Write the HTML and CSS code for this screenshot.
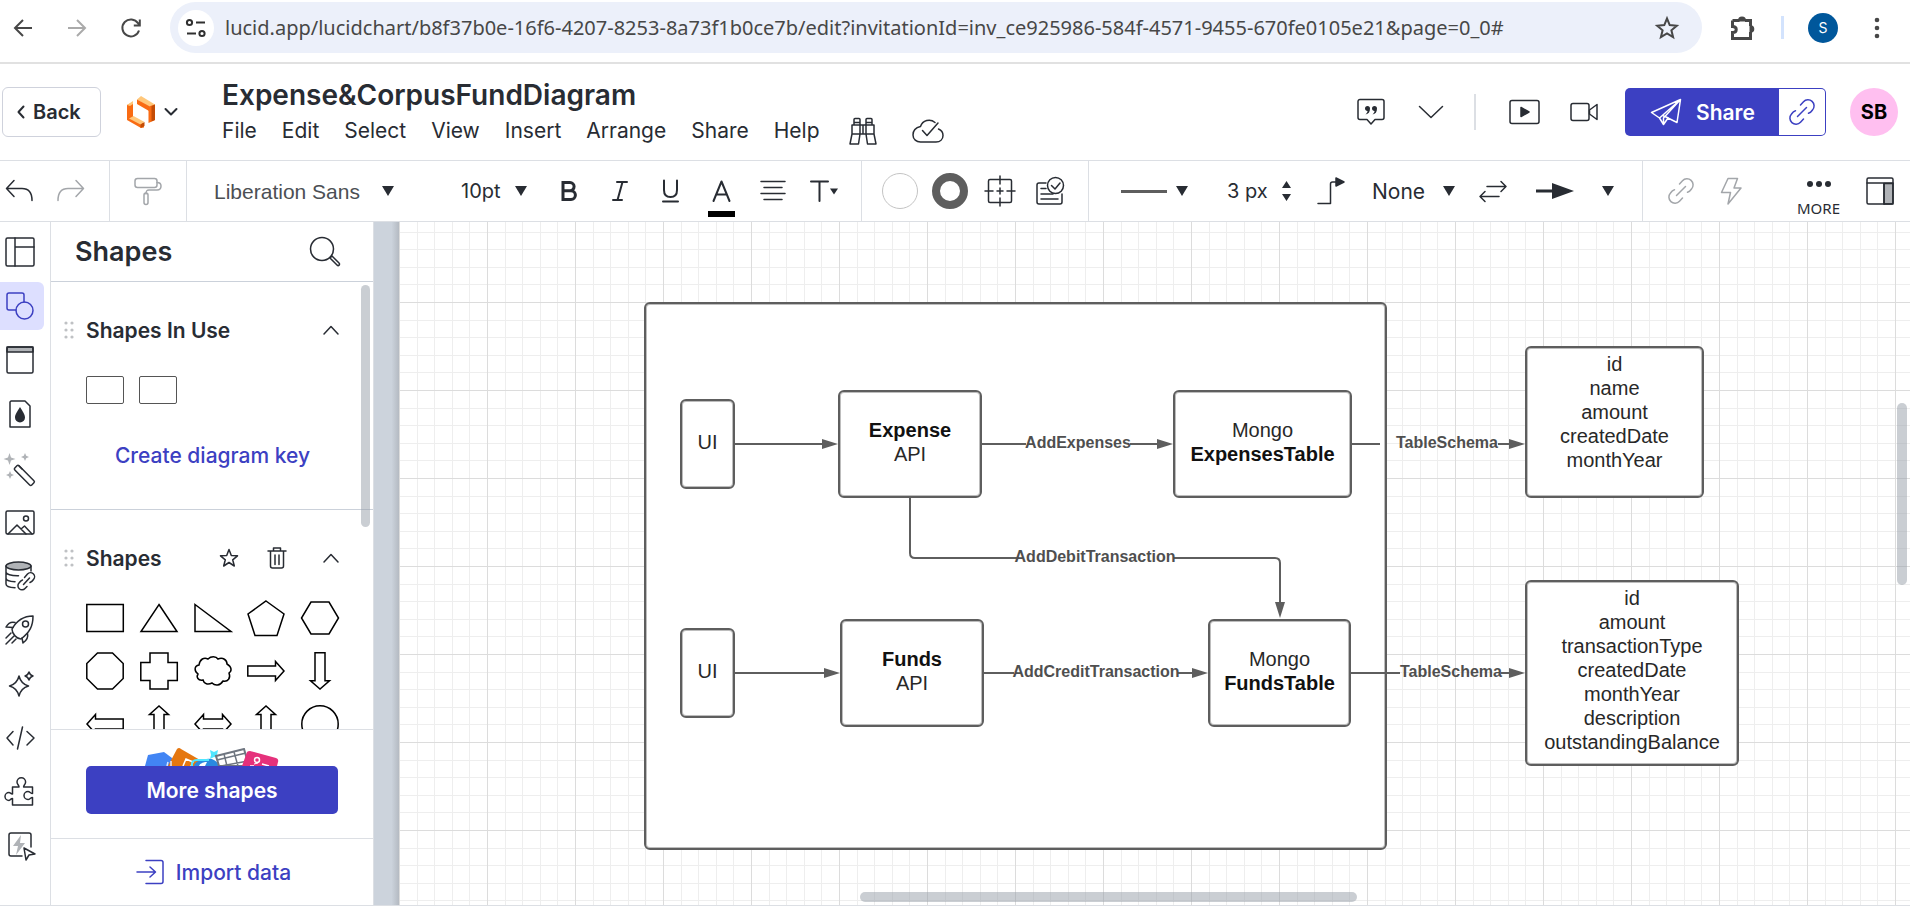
FILE: index.html
```html
<!DOCTYPE html>
<html lang="en">
<head>
<meta charset="utf-8">
<title>Expense&amp;CorpusFundDiagram: Lucidchart</title>
<link rel="stylesheet" href="styles.css">
</head>
<body>
<header class="browser">
  <nav class="browser-nav" aria-label="Browser">
    <button class="plain" aria-label="Go back"><svg width="24" height="24" viewBox="0 0 24 24" class="chrome-ink"><path d="M21 12H4M12 4l-8 8 8 8"/></svg></button>
    <button class="plain" aria-label="Go forward" disabled><svg width="24" height="24" viewBox="0 0 24 24" class="chrome-ink faded"><path d="M3 12h17M12 4l8 8-8 8"/></svg></button>
    <button class="plain" aria-label="Reload"><svg width="24" height="24" viewBox="0 0 24 24" class="chrome-ink"><path d="M20 14.500A8.500 8.500 0 1 1 19 7.200L20.500 9M20.800 3.500V9.500H14.800"/></svg></button>
  </nav>
  <div class="address">
    <button class="site-info plain" aria-label="Site information"><svg width="22" height="20" viewBox="0 0 22 20" class="chrome-ink thick"><circle cx="4.500" cy="4.500" r="2.600"/><path d="M11 4.500h9M2 15.500h9"/><circle cx="17" cy="15.500" r="2.600"/></svg></button>
    <input class="url" type="text" aria-label="Address" value="lucid.app/lucidchart/b8f37b0e-16f6-4207-8253-8a73f1b0ce7b/edit?invitationId=inv_ce925986-584f-4571-9455-670fe0105e21&amp;page=0_0#">
    <button class="plain" aria-label="Bookmark"><svg width="24" height="24" viewBox="0 0 24 24" class="chrome-ink"><path d="M12 2.500l2.700 6.600 7.100.6-5.400 4.600 1.700 6.900L12 17.500l-6.100 3.700 1.700-6.900L2.200 9.700l7.100-.6z"/></svg></button>
  </div>
  <div class="browser-tools">
    <button class="plain" aria-label="Extensions"><svg width="26" height="26" viewBox="0 0 26 26" class="chrome-ink"><path d="M2.500 5.500H9.500M15 5.500H20.500V11M20.500 17V23.500H2.500V17.500C7.500 17.500 7.500 11.500 2.500 11.500V5.500" stroke-width="3"/><path d="M9 5.500a3 3 0 0 1 6 0zM20.500 11.200a2.700 2.700 0 0 1 0 5.600z" class="solid"/></svg></button>
    <span class="browser-rule"></span>
    <button class="profile" aria-label="Profile">S</button>
    <button class="plain" aria-label="Browser menu"><svg width="6" height="22" viewBox="0 0 6 22" fill="#474747"><circle cx="3" cy="3" r="2.300"/><circle cx="3" cy="11" r="2.300"/><circle cx="3" cy="19" r="2.300"/></svg></button>
  </div>
</header>

<header class="app-header">
  <button class="back"><svg width="8" height="14" viewBox="0 0 8 14" class="ink bold"><path d="M6.500 1.500L1.500 7l5 5.500"/></svg>Back</button>
  <button class="plain brand" aria-label="Lucidchart menu">
    <svg width="28" height="32" viewBox="0 0 28 32"><path d="M0 9l6-3v16l-6 0z" fill="#f96b13"/><path d="M0 9l6-4v3l-3 2z" fill="#ffc77a"/><path d="M0 22l6-1 11 6.500V31.500L14 32 0 24z" fill="#f96b13"/><path d="M2 22.500l4.500-2.500 11 6-4 2.500z" fill="#ffc77a"/><path d="M13.500 28.500l4-2.500v4l-4 2z" fill="#c44c05"/><path d="M10 3.500L14 0 28 8.500 22 11z" fill="#ffc77a"/><path d="M10 3.500L22 10v5L10 8z" fill="#f96b13"/><path d="M21.500 10.500L28 8.500V24l-6.500 3z" fill="#f96b13"/><path d="M24.500 10L28 8.500V24l-3.500 1.500z" fill="#c44c05"/></svg>
    <svg width="14" height="10" viewBox="0 0 14 10" class="ink bold"><path d="M1.500 2L7 7.500 12.500 2"/></svg>
  </button>
  <div class="doc">
    <h1 class="doc-title">Expense&amp;CorpusFundDiagram</h1>
    <nav class="menu" aria-label="Document">
      <button class="plain">File</button><button class="plain">Edit</button><button class="plain">Select</button><button class="plain">View</button><button class="plain">Insert</button><button class="plain">Arrange</button><button class="plain">Share</button><button class="plain">Help</button>
      <button class="plain find" aria-label="Find"><svg width="28" height="28" viewBox="0 0 28 28" class="ink"><path d="M3 8h22v9H3zM5 8V2.500q0-1 1-1h4q1 0 1 1V8M17 8V2.500q0-1 1-1h4q1 0 1 1V8M11 8v9M17 8v9M3 17L1 27h8.500l1.500-10M25 17l2 10h-8.500L17 17M5 5.500h6M17 5.500h6M14 8v9"/></svg></button>
      <button class="plain saved" aria-label="Saved"><svg width="32" height="26" viewBox="0 0 32 26" class="ink"><path d="M23 4.500A9 9 0 0 0 8.500 8.500C4 9.500 1 12.500 1 17c0 4.500 3.500 7 7.500 7H24c4 0 7-2.500 7-6.500 0-3-2-5.500-4.500-6.500"/><path d="M10.500 12.500l4.500 5L26 5"/></svg></button>
    </nav>
  </div>
  <div class="header-tools">
    <button class="plain" aria-label="Comments"><svg width="28" height="28" viewBox="0 0 28 28" class="ink"><path d="M3 1.500h22a2 2 0 0 1 2 2v16a2 2 0 0 1-2 2h-7L14 26l-4-4.500H3a2 2 0 0 1-2-2v-16a2 2 0 0 1 2-2z"/><path d="M8 10.500a2.500 2.500 0 1 1 5 0c0 3.500-1.500 5.500-4.500 6 1.500-1.500 2-2.500 2-3.500-1.500 0-2.500-1-2.500-2.500zM15 10.500a2.500 2.500 0 1 1 5 0c0 3.500-1.500 5.500-4.500 6 1.500-1.500 2-2.500 2-3.500-1.500 0-2.500-1-2.500-2.500z" fill="#282c33" stroke="none"/></svg></button>
    <button class="plain more-caret" aria-label="More"><svg width="26" height="14" viewBox="0 0 26 14" class="ink"><path d="M1.500 1.500L13 12.500 24.500 1.500"/></svg></button>
    <span class="header-rule"></span>
    <button class="plain" aria-label="Present"><svg width="32" height="26" viewBox="0 0 32 26" class="ink"><rect x="1" y="1.500" width="29" height="23" rx="2"/><path d="M12 8.500l8 4.500-8 4.500z" fill="#282c33"/></svg></button>
    <button class="plain video" aria-label="Video call"><svg width="28" height="20" viewBox="0 0 28 20" class="ink"><rect x="1" y="1.500" width="18" height="17" rx="2"/><path d="M19.500 8L27 2.500v15L19.500 12z"/></svg></button>
    <div class="share">
      <button class="share-main"><svg width="32" height="28" viewBox="0 0 32 28" class="on-dark"><path d="M30.500 1.500L1.500 14.500l8 5.500L30.500 1.500l-3.500 23-9-4.500-4.500 6.500-4-6.500M30.500 1.500L13.500 20v6M13.500 18l5 2"/></svg>Share</button>
      <button class="share-link" aria-label="Copy link"><svg width="26" height="26" viewBox="0 0 26 26" class="indigo"><path d="M11.500 6l3-3.200a6 6 0 0 1 9 8.200c-1 1.500-2 2.700-4 3.200M14.500 20l-3 3.200a6 6 0 0 1-9-8.200c1-1.500 2-2.700 4-3.200M8.500 17.500l9-9"/></svg></button>
    </div>
    <button class="avatar" aria-label="Account">SB</button>
  </div>
</header>

<div class="toolbar" role="toolbar" aria-label="Formatting">
  <div class="group g-history">
    <button class="plain" aria-label="Undo"><svg width="28" height="24" viewBox="0 0 28 24" class="ink"><path d="M9 1.500L1.500 9.500 9 17.500M1.500 9.500H17c6.500 0 10 4 10 12"/></svg></button>
    <button class="plain" aria-label="Redo" disabled><svg width="28" height="24" viewBox="0 0 28 24" class="ink grey"><path d="M19 1.500l7.500 8-7.500 8M26.500 9.500H11c-6.500 0-10 4-10 12"/></svg></button>
  </div>
  <div class="group g-paint">
    <button class="plain" aria-label="Format painter" disabled><svg width="28" height="28" viewBox="0 0 28 28" class="ink grey"><rect x="1" y="1.500" width="22" height="9" rx="2.500"/><path d="M23 5.500c3 0 4 1 4 3.500s-1.500 4-4 4H15c-2.500 0-3 1-3 4"/><rect x="10" y="16" width="4" height="11.500" rx="2"/></svg></button>
  </div>
  <div class="group g-text">
    <select class="pick font-pick" aria-label="Font"><option>Liberation Sans</option></select><svg class="caret" width="12" height="10" viewBox="0 0 12 10"><path d="M0 0h12L6 10z"/></svg>
    <select class="pick size-pick" aria-label="Font size"><option>10pt</option></select><svg class="caret" width="12" height="10" viewBox="0 0 12 10"><path d="M0 0h12L6 10z"/></svg>
    <div class="style-buttons">
      <button class="plain" aria-label="Bold"><svg width="20" height="24" viewBox="0 0 20 24" class="ink heavy"><path d="M4 3.500h7a4 4 0 0 1 0 8.200H4zM4 11.700h8a4.400 4.400 0 0 1 0 8.800H4z"/></svg></button>
      <button class="plain" aria-label="Italic"><svg width="20" height="24" viewBox="0 0 20 24" class="ink bold"><path d="M7 3h10M3 21h9M12.500 3L7.500 21"/></svg></button>
      <button class="plain" aria-label="Underline"><svg width="20" height="24" viewBox="0 0 20 24" class="ink bold"><path d="M3 1.500V11c0 4.500 2.500 7 6.500 7s6.500-2.500 6.500-7V1.500M2 22.500h15"/></svg></button>
      <button class="plain font-color" aria-label="Text colour"><svg width="20" height="24" viewBox="0 0 20 24" class="ink bold"><path d="M1.500 22L9.500 2.500 17.500 22M4.500 15.500h10"/></svg></button>
      <button class="plain" aria-label="Align"><svg width="26" height="24" viewBox="0 0 26 24" class="ink"><path d="M1 2.500h24M4 8.500h18M1 14.500h24M4 20.500h18"/></svg></button>
      <button class="plain" aria-label="Text options"><svg width="28" height="24" viewBox="0 0 28 24" class="ink bold"><path d="M1 2.500h17M9.500 2.500V22"/><path d="M20 9.500h8l-4 6z" fill="#282c33" stroke="none"/></svg></button>
    </div>
  </div>
  <div class="group g-shape">
    <button class="plain" aria-label="Fill"><span class="fill-dot"></span></button>
    <button class="plain" aria-label="Line colour"><span class="line-dot"></span></button>
    <button class="plain" aria-label="Frame"><svg width="30" height="30" viewBox="0 0 30 30" class="ink"><rect x="3.500" y="3.500" width="23" height="23" rx="1.500"/><path d="M15 0v8M15 22v8M0 15h8M22 15h8M15 12v6M12 15h6"/></svg></button>
    <button class="plain" aria-label="Tasks"><svg width="30" height="30" viewBox="0 0 30 30" class="ink"><path d="M11 7H4a2 2 0 0 0-2 2v17a2 2 0 0 0 2 2h21a2 2 0 0 0 2-2v-8M6 12.500h5M6 18h9M6 23h17M16 18h2"/><circle cx="20.500" cy="9.500" r="8"/><path d="M16.500 9.500l3.500 3.500 5-6"/></svg></button>
  </div>
  <div class="group g-line">
    <button class="plain line-pick" aria-label="Line style"><span class="line-sample"></span><svg class="caret" width="12" height="10" viewBox="0 0 12 10"><path d="M0 0h12L6 10z"/></svg></button>
    <input class="width-input" type="text" aria-label="Line width" value="3 px">
    <button class="plain stepper" aria-label="Change line width"><svg width="9" height="20" viewBox="0 0 9 20" class="caret"><path d="M0 7h9L4.500 0zM0 13h9L4.500 20z"/></svg></button>
    <button class="plain elbow" aria-label="Connector shape"><svg width="28" height="28" viewBox="0 0 28 28" class="ink"><path d="M1 26.500h12.500V7a2 2 0 0 1 2-2H20"/><path d="M19 1l8 4-8 4z" fill="#282c33"/></svg></button>
    <select class="pick end-pick" aria-label="Line start"><option>None</option></select><svg class="caret" width="12" height="10" viewBox="0 0 12 10"><path d="M0 0h12L6 10z"/></svg>
    <button class="plain swap" aria-label="Swap ends"><svg width="28" height="22" viewBox="0 0 28 22" class="ink"><path d="M8 6.500h19M22 1.500l5 5-5 5M20 16.500H1M6 11.500l-5 5 5 5"/></svg></button>
    <button class="plain end-arrow" aria-label="Line end"><svg width="38" height="16" viewBox="0 0 38 16"><path d="M0 6.500h16V0l22 8-22 8V9.500H0z" fill="#282c33"/></svg><svg class="caret" width="12" height="10" viewBox="0 0 12 10"><path d="M0 0h12L6 10z"/></svg></button>
  </div>
  <div class="group g-extra">
    <button class="plain" aria-label="Link" disabled><svg width="26" height="26" viewBox="0 0 26 26" class="ink grey"><path d="M11.500 6l3-3.200a6 6 0 0 1 9 8.200c-1 1.500-2 2.700-4 3.200M14.500 20l-3 3.200a6 6 0 0 1-9-8.200c1-1.500 2-2.700 4-3.200M8.500 17.500l9-9"/></svg></button>
    <button class="plain" aria-label="Actions" disabled><svg width="22" height="28" viewBox="0 0 22 28" class="ink grey"><path d="M8 1.500h9.500L14 11h7L8 27l2.500-11.500H1.500z"/></svg></button>
    <button class="plain more"><svg width="26" height="8" viewBox="0 0 26 8" fill="#282c33"><circle cx="4" cy="4" r="3"/><circle cx="13" cy="4" r="3"/><circle cx="22" cy="4" r="3"/></svg>MORE</button>
    <button class="plain" aria-label="Toggle side panel"><svg width="28" height="28" viewBox="0 0 28 28" class="ink"><path d="M18 6.500h9v20.500h-9z" fill="#b0b3b7"/><rect x="1" y="1" width="26" height="26" rx="1.500"/><path d="M1 6h26M18 6v21"/></svg></button>
  </div>
</div>

<main class="workspace">
  <nav class="rail" aria-label="Tools">
    <button class="plain" aria-label="Templates"><svg width="32" height="32" viewBox="0 0 32 32" class="ink"><rect x="2" y="2" width="28" height="28" rx="1.500"/><path d="M11 2v28M11 11h19"/></svg></button>
    <button class="plain active" aria-label="Shapes"><svg width="32" height="32" viewBox="0 0 32 32" class="indigo"><path d="M12 20H5a2 2 0 0 1-2-2V5a2 2 0 0 1 2-2h13a2 2 0 0 1 2 2v7"/><circle cx="20.500" cy="20.500" r="8.500"/></svg></button>
    <button class="plain" aria-label="Containers"><svg width="32" height="32" viewBox="0 0 32 32" class="ink"><path d="M3 3h26v5H3z" fill="#b0b3b7"/><rect x="3" y="3" width="26" height="26" rx="1.500"/></svg></button>
    <button class="plain" aria-label="Themes"><svg width="32" height="32" viewBox="0 0 32 32" class="ink"><path d="M7 3h14l5 5v21H6V4z"/><path d="M16 9c3 5 5 7.500 5 10.500a5 5 0 0 1-10 0C11 16.500 13 14 16 9z" fill="#282c33" stroke="none"/></svg></button>
    <button class="plain" aria-label="Magic"><svg width="32" height="32" viewBox="0 0 32 32" class="ink"><rect x="11" y="14" width="24" height="6" rx="1.500" transform="rotate(45 14 17)"/><path d="M15 14l3 3"/><path d="M5.500 1l1.500 4.500L11.500 7 7 8.500 5.500 13 4 8.500-.5 7 4 5.500zM21 1l1.200 2.800L25 5l-2.800 1.200L21 9l-1.200-2.800L17 5l2.800-1.200zM6 19l1.200 2.800L10 23l-2.800 1.200L6 27l-1.200-2.800L2 23l2.800-1.200z" fill="#b0b3b7" stroke="none"/></svg></button>
    <button class="plain" aria-label="Images"><svg width="32" height="32" viewBox="0 0 32 32" class="ink"><rect x="2" y="5" width="28" height="23" rx="1.500"/><circle cx="22" cy="12.500" r="2.500"/><path d="M4 28l9-9 9 9M17 23l3.500-3 7.500 8"/></svg></button>
    <button class="plain" aria-label="Data linking"><svg width="32" height="32" viewBox="0 0 32 32" class="ink"><ellipse cx="14.500" cy="6" rx="12.500" ry="4" fill="#b0b3b7"/><path d="M2 6v18c0 2 4 3.500 9 3.700M27 6v5M2 12c0 2 5 4 12.500 3.800M2 18c0 2 4 3.500 9 3.700"/><path d="M20.500 17.500l3-3.500a4 4 0 0 1 6 5.500c-1 1.500-2 2.500-3.500 3M23 26.500l-2 2a4 4 0 0 1-6-5.500c1-1.500 2-2.500 3.500-3M19.500 24.500l6-6.500"/></svg></button>
    <button class="plain" aria-label="Quick start"><svg width="32" height="32" viewBox="0 0 32 32" class="ink"><path d="M8 15C13 6 19 2 29 2c0 10-3 16-12 23-4 0-9-5-9-10z"/><circle cx="21.500" cy="10" r="3"/><path d="M11 8.500c-4-1-7 1-9 4.500l7 .5M23.500 19.500c1 4-1 7-4.500 9.500l-1-5M7 19l-5 5M10 22l-8 8M12 25l-4 4"/></svg></button>
    <button class="plain" aria-label="AI"><svg width="32" height="32" viewBox="0 0 32 32" class="ink"><path d="M15 8c1.500 6 4 8.500 9.500 10C19 19.500 16.500 22 15 28c-1.500-6-4-8.500-9.500-10C11 16.500 13.500 14 15 8zM25 4c1 3 2 3.500 4 4-2 .5-3 1-4 4-1-3-2-3.500-4-4 2-.5 3-1 4-4z"/></svg></button>
    <button class="plain" aria-label="Code"><svg width="32" height="32" viewBox="0 0 32 32" class="ink"><path d="M9 9.500L3 16l6 7M23 9.500l7 6.500-7 7M18.500 5l-5 22"/></svg></button>
    <button class="plain" aria-label="Add-ons"><svg width="32" height="32" viewBox="0 0 32 32" class="ink"><path d="M8.500 11H15c0-2-2-2.500-2-5a4.300 4.300 0 0 1 8.600 0c0 2.500-2 3-2 5h8.900v6.500c-2 0-2.500-2-4.500-2a4 4 0 0 0 0 8c2 0 2.500-2 4.500-2V29h-20v-6.500c-2 0-2 2-3.500 2a4 4 0 0 1 0-8c1.500 0 1.500 1.500 3.500 1.500z"/></svg></button>
    <button class="plain" aria-label="Automation"><svg width="32" height="32" viewBox="0 0 32 32" class="ink"><path d="M17 5l-8 11h5l-2 9 9-12h-5z" fill="#b0b3b7" stroke="none"/><path d="M18 26H7a2 2 0 0 1-2-2V5a2 2 0 0 1 2-2h18a2 2 0 0 1 2 2v12"/><path d="M20 18l11 6-6 1-3 5z"/></svg></button>
  </nav>

  <aside class="panel">
    <div class="panel-head">
      <h2>Shapes</h2>
      <button class="plain" aria-label="Search shapes"><svg width="32" height="32" viewBox="0 0 32 32" class="ink"><circle cx="13" cy="13" r="11.500"/><path d="M21 22l2-2 7 7c1.500 1.500-.5 3.500-2 2z"/></svg></button>
    </div>
    <div class="panel-scroll">
      <section class="library in-use">
        <div class="library-head">
          <svg class="grip" width="10" height="18" viewBox="0 0 10 18"><circle cx="2" cy="2" r="1.600"/><circle cx="8" cy="2" r="1.600"/><circle cx="2" cy="9" r="1.600"/><circle cx="8" cy="9" r="1.600"/><circle cx="2" cy="16" r="1.600"/><circle cx="8" cy="16" r="1.600"/></svg>
          <h3>Shapes In Use</h3>
          <button class="plain" aria-label="Collapse Shapes In Use"><svg width="16" height="10" viewBox="0 0 16 10" class="ink"><path d="M1 9l7-7.500L15 9"/></svg></button>
        </div>
        <div class="used"><span class="used-shape"></span><span class="used-shape"></span></div>
        <a class="key-link" href="#key">Create diagram key</a>
      </section>
      <section class="library">
        <div class="library-head">
          <svg class="grip" width="10" height="18" viewBox="0 0 10 18"><circle cx="2" cy="2" r="1.600"/><circle cx="8" cy="2" r="1.600"/><circle cx="2" cy="9" r="1.600"/><circle cx="8" cy="9" r="1.600"/><circle cx="2" cy="16" r="1.600"/><circle cx="8" cy="16" r="1.600"/></svg>
          <h3>Shapes</h3>
          <button class="plain" aria-label="Favourite"><svg width="18" height="20" viewBox="0 0 18 20" class="ink"><path d="M9 1.500l2.300 6 6.200.3-4.800 4 1.600 6.200L9 14.500 3.700 18l1.600-6.200-4.800-4 6.200-.3z"/></svg></button>
          <button class="plain trash" aria-label="Delete"><svg width="18" height="22" viewBox="0 0 18 22" class="ink"><path d="M0 4h18M5.500 4V1h7v3M2.500 4v15a2 2 0 0 0 2 2h9a2 2 0 0 0 2-2V4M7 8v9.500M11 8v9.500"/></svg></button>
          <button class="plain fold" aria-label="Collapse Shapes"><svg width="16" height="10" viewBox="0 0 16 10" class="ink"><path d="M1 9l7-7.500L15 9"/></svg></button>
        </div>
        <div class="palette">
          <svg viewBox="0 0 38 38"><path d="M.8 5.500h36.500v27H.8z"/></svg>
          <svg viewBox="0 0 38 38"><path d="M19 5.500l18 27H1z"/></svg>
          <svg viewBox="0 0 38 38"><path d="M1 5.500l36 27H1z"/></svg>
          <svg viewBox="0 0 38 38"><path d="M19 2l18 13-7 21.500H8L1 15z"/></svg>
          <svg viewBox="0 0 38 38"><path d="M10 3h18l9.500 16L28 35H10L.5 19z"/></svg>
          <svg viewBox="0 0 38 38"><path d="M11.500 1h15l10.700 10.500v15L26.500 37h-15L.8 26.500v-15z"/></svg>
          <svg viewBox="0 0 38 38"><path d="M10 1h18v9.500h9.300v18H28V37H10v-8.500H.8v-18H10z"/></svg>
          <svg viewBox="0 0 38 38"><path d="M5 13c1-6 5-8 9-6 3-3 8-3 10 0 5-2 9 1 9 5 5 3 5 7 2 9 2 5-1 9-6 8-3 5-8 5-11 2-4 2-8 1-9-3-5 1-7-3-5-6-4-3-4-8 1-9z"/></svg>
          <svg viewBox="0 0 38 38"><path d="M.8 14h27.700v-4.500L37 19l-8.500 9.500V24H.8z"/></svg>
          <svg viewBox="0 0 38 38"><path d="M14 .8v28H9.500L19 37l9.500-8.200H24V.8z"/></svg>
          <svg viewBox="0 0 38 38"><path d="M37.200 14H9.500V9.500L1 19l8.500 9.500V24h27.700z"/></svg>
          <svg viewBox="0 0 38 38"><path d="M14 37.200V9.500H9.500L19 1l9.500 8.500H24v27.700z"/></svg>
          <svg viewBox="0 0 38 38"><path d="M1 19l8.500-9.500V14h19V9.500L37 19l-8.500 9.500V24h-19v4.500z"/></svg>
          <svg viewBox="0 0 38 38"><path d="M14 37.200V9.500H9.500L19 1l9.500 8.500H24v27.700z"/></svg>
          <svg viewBox="0 0 38 38"><circle cx="19" cy="19" r="18.200"/></svg>
        </div>
      </section>
      <span class="thumb thumb-panel"></span>
    </div>
    <div class="panel-more">
      <svg class="teaser" width="136" height="18" viewBox="0 0 136 18"><path d="M1 18L4 7 20 4l8 6 2 8z" fill="#4285f4"/><path d="M24 18L33 1q2-2 4 0L56 12v6z" fill="#e57710"/><path d="M39 18l3-7 7 3-2 4" fill="none" stroke="#fff" stroke-width="1.500"/><path d="M50 18c1-4 5-6 9-6 8-3 14 0 16 6z" fill="#2a8ae0"/><path d="M55 18c1-3 5-4 8-4l-2 4z" fill="#fff"/><path d="M48 18v-3q1-3 5-3h12" fill="none" stroke="#50e6ff" stroke-width="2"/><path d="M66 2l4 2 4-2-1 5 2 3-5-1-4 2 1-4z" fill="#50e6ff"/><path d="M75 18l-3-10 28-7 5 17z" fill="#fff" stroke="#6f7680" stroke-width="2"/><path d="M73 12l29-7M80 6l3 12M90 4l4 14M77 18l27-5" fill="none" stroke="#6f7680" stroke-width="1.500"/><path d="M98 18l5-14q1-1 3-1l26 7q3 1 2 4l-1 4z" fill="#e5317b"/><path d="M106 18h4m8-2l7 2" stroke="#fff" stroke-width="1.500"/><circle cx="113" cy="12" r="2.500" fill="none" stroke="#fff" stroke-width="1.500"/><path d="M110 16l4-1" stroke="#fff"/><path d="M23 18l1-4m3 4v-5" stroke="#dbe8ff" stroke-width="1.500"/></svg>
      <button class="more-shapes">More shapes</button>
    </div>
    <button class="import plain"><svg width="28" height="26" viewBox="0 0 28 26" class="indigo"><path d="M9 1.500h15a2 2 0 0 1 2 2v19a2 2 0 0 1-2 2H9M0 13h18M13 8l5.500 5-5.500 5"/></svg>Import data</button>
  </aside>

  <div class="gutter"></div>

  <div class="canvas">
    <div class="grid-sheet"></div>
    <div class="node boundary"></div>
    <svg class="wires" width="1511" height="683" viewBox="0 0 1511 683">
      <g fill="none" stroke="#5e5e5e" stroke-width="2">
        <path d="M336 222h90M583 222h44M731 222h28M953 222h28M1099 222h12"/>
        <path d="M511 276v55q0 5 5 5h102M774 336h102q5 0 5 5v39"/>
        <path d="M336 451h92M585 451h30M779 451h15M952 451h49M1102 451h10"/>
      </g>
      <g fill="#5e5e5e">
        <path d="M423 217l16 5-16 5zM758 217l16 5-16 5zM1110 217l16 5-16 5z"/>
        <path d="M876 380h10l-5 16zM425 446l16 5-16 5zM793 446l16 5-16 5zM1110 446l16 5-16 5z"/>
      </g>
    </svg>
    <div class="node ui-a">UI</div>
    <div class="node expense"><b>Expense</b>API</div>
    <div class="node mongo-a">Mongo<b>ExpensesTable</b></div>
    <div class="node ui-b">UI</div>
    <div class="node funds"><b>Funds</b>API</div>
    <div class="node mongo-b">Mongo<b>FundsTable</b></div>
    <div class="node fields-a"><span>id</span><span>name</span><span>amount</span><span>createdDate</span><span>monthYear</span></div>
    <div class="node fields-b"><span>id</span><span>amount</span><span>transactionType</span><span>createdDate</span><span>monthYear</span><span>description</span><span>outstandingBalance</span></div>
    <span class="wire-label l-expenses">AddExpenses</span>
    <span class="wire-label l-debit">AddDebitTransaction</span>
    <span class="wire-label l-credit">AddCreditTransaction</span>
    <span class="wire-label l-schema-a">TableSchema</span>
    <span class="wire-label l-schema-b">TableSchema</span>
    <span class="thumb thumb-v"></span>
    <span class="thumb thumb-h"></span>
  </div>
</main>
</body>
</html>
```
FILE: styles.css
```css
* { box-sizing: border-box; }
body {
  margin: 0;
  height: 100vh;
  display: flex;
  flex-direction: column;
  overflow: hidden;
  background: #fff;
  color: #282c33;
  font-family: Inter, "Liberation Sans", sans-serif;
  font-size: 21px;
}
h1, h2, h3 { margin: 0; font-weight: 600; }
button, input, select { font: inherit; color: inherit; }
svg { display: block; flex: none; }
.plain { border: 0; background: none; padding: 0; display: flex; align-items: center; justify-content: center; flex: none; }

.ink, .indigo, .on-dark, .chrome-ink { fill: none; stroke: #282c33; stroke-width: 1.500; stroke-linejoin: round; stroke-linecap: round; overflow: visible; }
.bold { stroke-width: 2; }
.heavy { stroke-width: 3; stroke-linejoin: miter; }
.ink.grey { stroke: #a3a6aa; }
.indigo { stroke: #3c40c2; }
.on-dark { stroke: #fff; }
.chrome-ink { stroke: #474747; stroke-width: 2; stroke-linejoin: miter; stroke-linecap: butt; }
.chrome-ink.thick { stroke: #303030; }
.chrome-ink.faded { stroke: #aaa; }
.solid { fill: #474747; }
.caret { fill: #282c33; }

/* browser bar */
.browser { display: flex; align-items: flex-start; height: 64px; padding-top: 2px; border-bottom: 2px solid #e1e1e1; flex: none; }
.browser-nav { display: flex; gap: 30px; padding: 14px 27px 0 11px; }
.address { flex: 1; display: flex; align-items: center; height: 51px; padding: 0 23px 0 8px; border-radius: 26px; background: #ecf0fa; }
.site-info { width: 36px; height: 36px; border-radius: 50%; background: #fff; }
.url { flex: 1; min-width: 0; margin-left: 11px; padding: 0; border: 0; background: none; color: #474747; font-family: "Noto Sans", "Open Sans", sans-serif; font-size: 20px; }
.browser-tools { display: flex; align-items: center; height: 51px; padding: 0 30px 0 28px; }
.browser-rule { width: 3px; height: 23px; margin: 0 24px 0 25px; background: #d3e3fd; }
.profile { width: 30px; height: 30px; margin-right: 36px; padding: 0; border: 0; border-radius: 50%; background: #00579b; color: #fff; font-size: 14px; line-height: 30px; }

/* document header */
.app-header { display: flex; align-items: center; height: 97px; padding: 0 12px 0 2px; border-bottom: 1px solid #dcdfe4; flex: none; }
.back { display: flex; align-items: center; gap: 8px; width: 99px; height: 50px; padding: 0 0 0 14px; border: 1px solid #cfd2dc; border-radius: 6px; background: #fff; font-size: 20px; font-weight: 600; }
.brand { gap: 9px; margin: 0 44px 0 26px; }
.doc { padding-top: 2px; }
.doc-title { font-size: 28px; line-height: 36px; }
.menu { display: flex; align-items: center; gap: 25px; height: 36px; }
.menu .plain { line-height: 36px; }
.menu .find { margin-left: 4px; }
.menu .saved { margin-left: 10px; }
.header-tools { display: flex; align-items: center; margin-left: auto; }
.more-caret { margin: 0 30px 0 33px; }
.header-rule { width: 2px; height: 36px; margin-right: 33px; background: #dcdfe4; }
.video { margin: 0 27px 0 29px; }
.share { display: flex; height: 48px; margin-right: 24px; }
.share-main { display: flex; align-items: center; gap: 14px; width: 154px; padding: 0 0 0 25px; border: 0; border-radius: 5px 0 0 5px; background: #3c40c2; color: #fff; font-weight: 600; }
.share-link { display: flex; align-items: center; justify-content: center; width: 47px; padding: 0; border: 1px solid #3c40c2; border-left: 0; border-radius: 0 5px 5px 0; background: #fff; }
.avatar { width: 48px; height: 48px; padding: 0; border: 0; border-radius: 50%; background: #ffbff0; color: #000; font-size: 20px; font-weight: 700; }

/* formatting toolbar */
.toolbar { display: flex; height: 61px; border-bottom: 1px solid #dcdfe4; flex: none; }
.group { display: flex; align-items: center; border-right: 1px solid #dcdfe4; flex: none; }
.g-history { gap: 24px; padding: 0 24px 0 5px; }
.g-paint { padding: 0 24px; }
.g-text { padding: 0 12px 0 27px; }
.g-shape { padding: 0 13px; }
.g-line { padding: 0 28px 0 32px; }
.g-extra { flex: 1; gap: 26px; padding: 0 16px 0 25px; border-right: 0; }
.pick { appearance: none; border: 0; padding: 0; background: none; height: 40px; }
.font-pick { width: 168px; font-family: "Liberation Sans", sans-serif; color: #4c4f54; }
.size-pick { width: 54px; margin-left: 67px; font-size: 20px; }
.style-buttons { display: flex; margin-left: 16px; }
.style-buttons .plain { width: 51px; height: 60px; }
.font-color { position: relative; }
.font-color::after { content: ""; position: absolute; left: 12px; bottom: 4px; width: 27px; height: 6px; background: #000; }
.g-shape .plain { width: 50px; }
.fill-dot, .line-dot { width: 36px; height: 36px; border-radius: 50%; border: 1px solid #c4c4c4; background: #fff; }
.line-dot { border: 8px solid #5e5e5e; }
.line-pick { gap: 9px; }
.line-sample { width: 46px; height: 3px; background: #5e5e5e; }
.width-input { width: 45px; margin-left: 39px; padding: 0; border: 0; background: none; font-size: 20px; }
.stepper { margin-left: 10px; }
.elbow { margin: 0 27px 0 26px; }
.end-pick { width: 71px; }
.swap { margin: 0 29px 0 24px; }
.end-arrow { gap: 28px; }
.g-extra .more { flex-direction: column; gap: 12px; margin: 14px 0 0 auto; font-family: "Noto Sans", sans-serif; font-size: 15px; line-height: 16px; }

/* workspace */
.workspace { flex: 1; min-height: 0; display: flex; border-bottom: 1px solid #dcdfe4; }
.rail { display: flex; flex-direction: column; gap: 6px; width: 51px; padding-top: 6px; border-right: 1px solid #dcdfe4; flex: none; }
.rail .plain { width: 44px; height: 48px; padding-right: 4px; border-radius: 0 6px 6px 0; }
.rail .active { background: #dddfff; }

.panel { display: flex; flex-direction: column; width: 323px; border-right: 1px solid #dcdfe4; flex: none; }
.panel-head { display: flex; align-items: center; justify-content: space-between; height: 60px; padding: 0 32px 0 24px; border-bottom: 1px solid #cbd1da; flex: none; }
.panel-head h2 { font-size: 27px; }
.panel-scroll { position: relative; flex: 1; min-height: 0; overflow: hidden; }
.library { padding: 36px 34px 0 13px; }
.in-use { height: 228px; border-bottom: 1px solid #cbd1da; }
.library-head { display: flex; align-items: center; height: 24px; }
.library-head h3 { flex: 1; margin-left: 12px; font-size: 21px; }
.grip { fill: #bfc1c4; }
.trash { margin: 0 37px 0 30px; }
.used { display: flex; gap: 15px; margin: 34px 0 0 22px; }
.used-shape { width: 38px; height: 28px; border: 1px solid #555; border-radius: 2px; }
.key-link { display: block; margin: 40px 0 0 22px; text-align: center; line-height: 24px; color: #3c40c2; font-weight: 500; text-decoration: none; }
.palette { display: grid; grid-template-columns: repeat(5, 38px); justify-content: space-between; row-gap: 15px; margin: 29px 0 0 22px; }
.palette svg { width: 38px; height: 38px; fill: none; stroke: #000; stroke-width: 1.500; overflow: visible; }
.panel-more { padding: 18px 35px 24px; border-top: 1px solid #dcdfe4; border-bottom: 1px solid #dcdfe4; flex: none; }
.teaser { margin: 0 auto; }
.more-shapes { display: block; width: 100%; height: 48px; border: 0; border-radius: 5px; background: #3c40c2; color: #fff; font-weight: 600; }
.import { gap: 11px; height: 66px; padding-left: 4px; color: #3c40c2; font-weight: 500; }

.gutter { width: 25px; background: linear-gradient(to right, #ccd3dc 70%, #b4bac2); flex: none; }

/* diagram canvas */
.canvas { position: relative; flex: 1; overflow: hidden; }
.grid-sheet {
  position: absolute;
  inset: 0;
  background:
    linear-gradient(to right, #dcdcdc 1px, transparent 1px) 0 -8px / 88px 88px,
    linear-gradient(to bottom, #dcdcdc 1px, transparent 1px) 0 -8px / 88px 88px,
    linear-gradient(to right, transparent 18px, #eee 18px 19px, transparent 19px 35px, #eee 35px 36px, transparent 36px 53px, #eee 53px 54px, transparent 54px 70px, #eee 70px 71px, transparent 71px) 0 -8px / 88px 88px,
    linear-gradient(to bottom, transparent 18px, #eee 18px 19px, transparent 19px 35px, #eee 35px 36px, transparent 36px 53px, #eee 53px 54px, transparent 54px 70px, #eee 70px 71px, transparent 71px) 0 -8px / 88px 88px;
}
.node {
  position: absolute;
  display: flex;
  flex-direction: column;
  align-items: center;
  justify-content: center;
  padding-bottom: 4px;
  border: 2px solid #5e5e5e;
  border-radius: 6px;
  background: #fff;
  box-shadow: inset 0 0 0 1px #bdbdbd;
  color: #282828;
  font-family: "Liberation Sans", Arial, sans-serif;
  font-size: 20px;
  line-height: 24px;
}
.node b { color: #111; }
.wires { position: absolute; left: 0; top: 0; }
.boundary { left: 245px; top: 80px; width: 743px; height: 548px; }
.ui-a { left: 281px; top: 177px; width: 55px; height: 90px; }
.expense { left: 439px; top: 168px; width: 144px; height: 108px; }
.mongo-a { left: 774px; top: 168px; width: 179px; height: 108px; }
.ui-b { left: 281px; top: 406px; width: 55px; height: 90px; }
.funds { left: 441px; top: 397px; width: 144px; height: 108px; }
.mongo-b { left: 809px; top: 397px; width: 143px; height: 108px; }
.fields-a { left: 1126px; top: 124px; width: 179px; height: 152px; padding-bottom: 20px; }
.fields-b { left: 1126px; top: 358px; width: 214px; height: 186px; padding-bottom: 6px; }
.wire-label { position: absolute; transform: translate(-50%, -50%); color: #4f4f4f; font-family: "Liberation Sans", Arial, sans-serif; font-size: 16px; line-height: 18px; font-weight: 700; }
.l-expenses { left: 679px; top: 221px; }
.l-debit { left: 696px; top: 335px; }
.l-credit { left: 697px; top: 450px; }
.l-schema-a { left: 1048px; top: 221px; }
.l-schema-b { left: 1052px; top: 450px; }
.thumb { position: absolute; border-radius: 5px; background: rgba(150, 158, 168, 0.5); }
.thumb-panel { right: 3px; top: 3px; width: 9px; height: 242px; }
.thumb-v { right: 3px; top: 181px; width: 10px; height: 182px; }
.thumb-h { left: 461px; bottom: 3px; width: 497px; height: 10px; }
```
